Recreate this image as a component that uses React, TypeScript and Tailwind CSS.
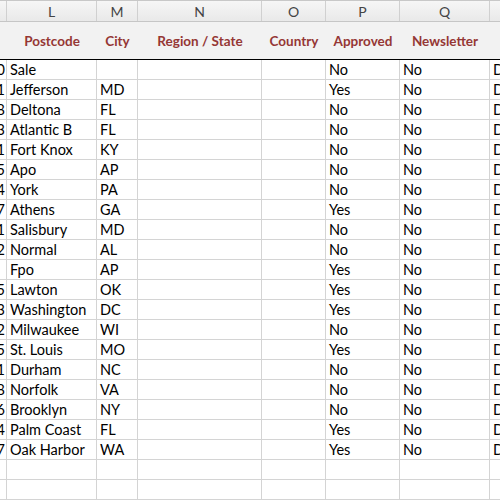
const cols = [
  { letter: "", w: "w-[7px]", title: "" },
  { letter: "L", w: "w-[90px]", title: "Postcode" },
  { letter: "M", w: "w-[41px]", title: "City" },
  { letter: "N", w: "w-[124px]", title: "Region / State" },
  { letter: "O", w: "w-[64px]", title: "Country" },
  { letter: "P", w: "w-[74px]", title: "Approved" },
  { letter: "Q", w: "w-[90px]", title: "Newsletter" },
  { letter: "", w: "w-[40px]", title: "" },
];

const rows = [
  ["0", "Sale", "", "No"],
  ["1", "Jefferson", "MD", "Yes"],
  ["8", "Deltona", "FL", "No"],
  ["3", "Atlantic B", "FL", "No"],
  ["1", "Fort Knox", "KY", "No"],
  ["5", "Apo", "AP", "No"],
  ["4", "York", "PA", "No"],
  ["7", "Athens", "GA", "Yes"],
  ["1", "Salisbury", "MD", "No"],
  ["2", "Normal", "AL", "No"],
  ["", "Fpo", "AP", "Yes"],
  ["5", "Lawton", "OK", "Yes"],
  ["3", "Washington", "DC", "Yes"],
  ["2", "Milwaukee", "WI", "No"],
  ["5", "St. Louis", "MO", "Yes"],
  ["1", "Durham", "NC", "No"],
  ["8", "Norfolk", "VA", "No"],
  ["6", "Brooklyn", "NY", "No"],
  ["4", "Palm Coast", "FL", "Yes"],
  ["7", "Oak Harbor", "WA", "Yes"],
];

const Cell = ({ w, children, right }: { w: string; children?: React.ReactNode; right?: boolean }) => (
  <div
    className={`${w} h-full shrink-0 overflow-hidden whitespace-nowrap border-r border-[#d4d4d4] flex items-center ${
      right ? "justify-end pr-[1px]" : "pl-[3px]"
    }`}
  >
    {children}
  </div>
);

export default function App() {
  const allRows = [...rows, null, null];

  return (
    <div className="w-[500px] h-[500px] overflow-hidden bg-white text-[14.5px] text-black font-['Lato','Open_Sans',sans-serif]">
      {/* column letters */}
      <div className="flex h-[22px] border-t border-[#c8c8c8] border-b border-b-[#c6c6c6] bg-gradient-to-b from-[#f6f6f6] to-[#e9e9e9]">
        {cols.map((c, i) => (
          <div
            key={i}
            className={`${c.w} h-full shrink-0 border-r border-[#d0d0d0] flex items-center justify-center text-[14px] text-[#444]`}
          >
            {c.letter}
          </div>
        ))}
      </div>

      {/* field titles */}
      <div className="flex h-[38px] bg-[#f2f2f2] border-b border-black">
        {cols.map((c, i) => (
          <div
            key={i}
            className={`${c.w} h-full shrink-0 flex items-center justify-center pt-[2px] font-bold text-[13.5px] text-[#953735] whitespace-nowrap`}
          >
            {c.title}
          </div>
        ))}
      </div>

      {/* data */}
      {allRows.map((r, i) => (
        <div key={i} className="flex h-[20px] border-b border-[#d4d4d4] leading-[20px]">
          <Cell w={cols[0].w} right>
            {r ? r[0] : ""}
          </Cell>
          <Cell w={cols[1].w}>{r ? r[1] : ""}</Cell>
          <Cell w={cols[2].w}>{r ? r[2] : ""}</Cell>
          <Cell w={cols[3].w} />
          <Cell w={cols[4].w} />
          <Cell w={cols[5].w}>{r ? r[3] : ""}</Cell>
          <Cell w={cols[6].w}>{r ? "No" : ""}</Cell>
          <Cell w={cols[7].w}>{r ? "D" : ""}</Cell>
        </div>
      ))}
    </div>
  );
}
